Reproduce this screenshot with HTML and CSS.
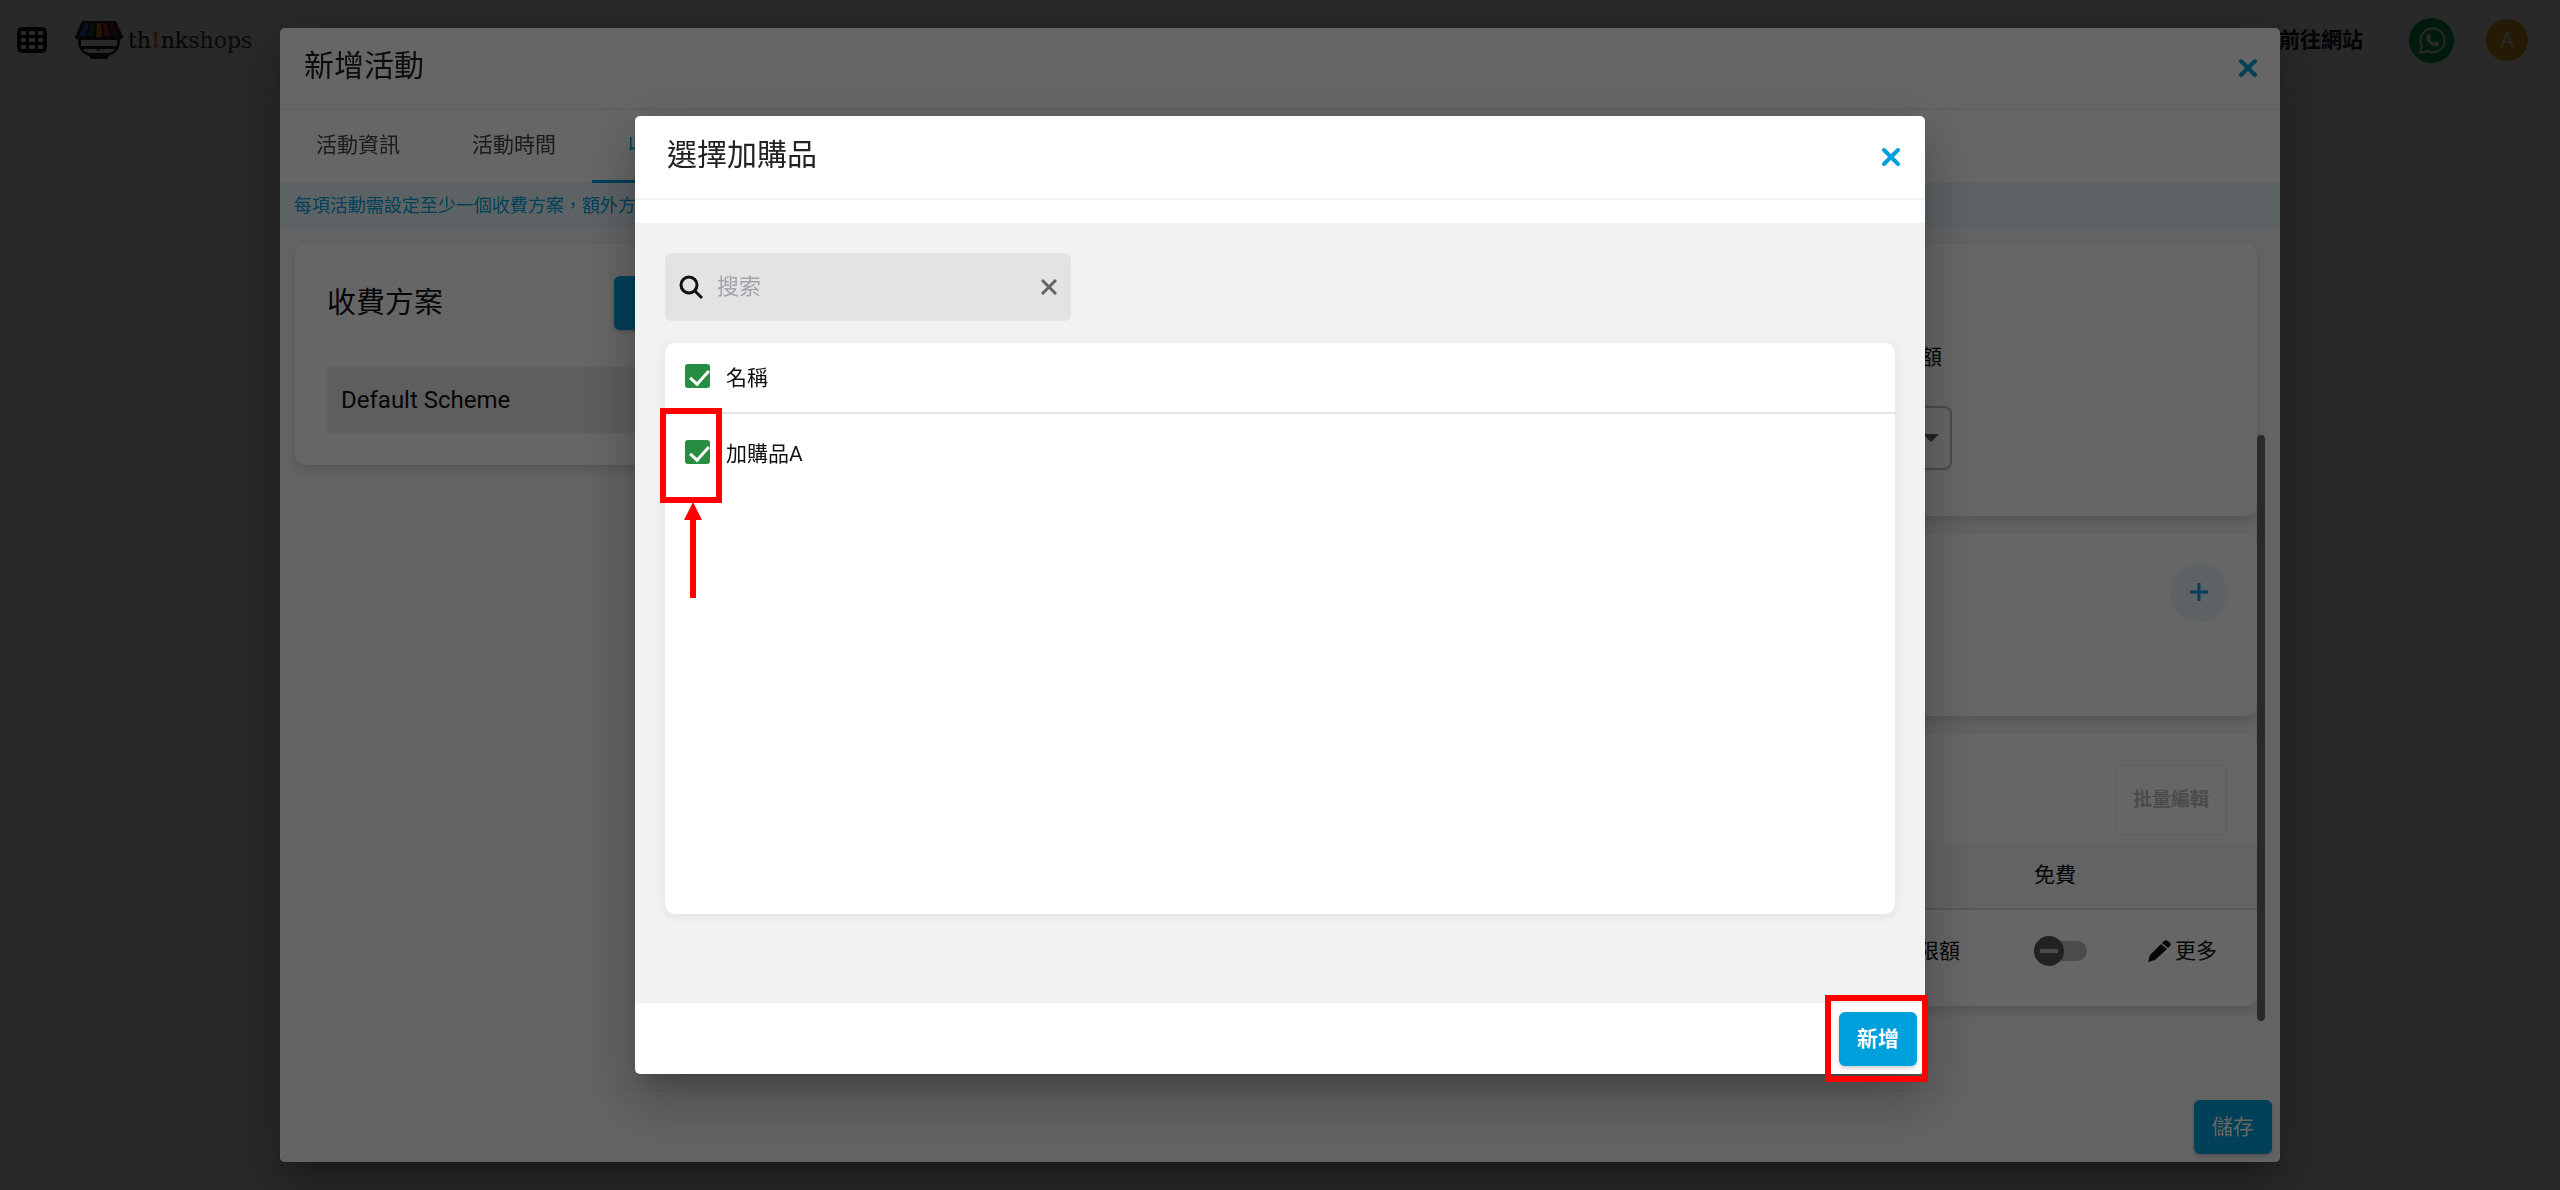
FILE: index.html
```html
<!DOCTYPE html>
<html lang="zh-Hant">
<head>
    <meta charset="UTF-8">
    <meta name="viewport" content="width=device-width, initial-scale=1.0">
    <title>thinkshops</title>
    <link rel="stylesheet" href="styles.css">
</head>
<body>
    <header class="topbar">
        <button class="icon-btn" aria-label="選單">
            <svg width="30" height="28" viewBox="0 0 30 28">
                <rect x="0" y="1" width="30" height="26" rx="5" fill="#111"/>
                <g fill="#fff">
                    <rect x="4" y="5" width="5" height="4" rx="1"/><rect x="12" y="5" width="6" height="4" rx="1"/><rect x="21" y="5" width="5" height="4" rx="1"/>
                    <rect x="4" y="12" width="5" height="4" rx="1"/><rect x="12" y="12" width="6" height="4" rx="1"/><rect x="21" y="12" width="5" height="4" rx="1"/>
                    <rect x="4" y="19" width="5" height="4" rx="1"/><rect x="12" y="19" width="6" height="4" rx="1"/><rect x="21" y="19" width="5" height="4" rx="1"/>
                </g>
            </svg>
        </button>
        <a class="logo" href="#">
            <svg width="50" height="40" viewBox="0 0 50 40">
                <path d="M4 17v4c0 7 4 13 11 15l2 3h16l2-3c7-2 11-8 11-15v-4z" fill="#222"/>
                <path d="M7 20h36v6H7zM9 29h13l2 2 3-2h14c-2 3-5 4-8 4H17c-4 0-6-1-8-4z" fill="#fff"/>
                <path d="M8 1h34l7 16c0 3-8 4-8 1 0 3-8 3-8 0 0 3-8 3-8 0 0 3-8 3-8 0 0 3-8 3-8 0 0 3-8 2-8-1z" fill="#222"/>
                <path d="M11 3h4l-3 13H5z" fill="#2471b8"/>
                <path d="M17 3h4l-2 13h-5z" fill="#26704a"/>
                <path d="M23 3h4l1 14h-6z" fill="#e8951c"/>
                <path d="M29 3h4l3 13h-6z" fill="#dc3545"/>
                <path d="M35 3h4l5 13h-5z" fill="#7b3024"/>
            </svg>
            <span class="logo-text">th<span class="logo-mark">!</span>nk<span class="logo-sub">shops</span></span>
        </a>
        <nav class="topbar-right">
            <a class="site-link" href="#">前往網站</a>
            <a class="whatsapp" href="#" aria-label="WhatsApp">
                <svg width="28" height="28" viewBox="0 0 28 28">
                    <path d="M2 27l2-7a12 12 0 1 1 5 5z" fill="none" stroke="#fff" stroke-width="2"/>
                    <path d="M10 8c1-1 2 0 3 3l-1 2c1 2 2 3 4 4l2-2c3 1 4 2 3 4-3 3-7 1-10-2s-4-7-1-9z" fill="#fff"/>
                </svg>
            </a>
            <span class="avatar">A</span>
        </nav>
    </header>

    <!-- event dialog -->
    <div class="backdrop">
        <section class="dialog event-dialog" role="dialog" aria-label="新增活動">
            <div class="dialog-header">
                <h2 class="dialog-title">新增活動</h2>
                <button class="icon-btn close" aria-label="關閉">
                    <svg width="20" height="20" viewBox="0 0 20 20"><path d="M3 3l14 14M17 3L3 17"/></svg>
                </button>
            </div>
            <div class="tabs">
                <button class="tab">活動資訊</button>
                <button class="tab">活動時間</button>
                <button class="tab active">收費方案</button>
            </div>
            <p class="notice">每項活動需設定至少一個收費方案，額外方案</p>
            <div class="event-body">
                <div class="card scheme-card">
                    <div class="scheme-head">
                        <h3>收費方案</h3>
                        <button class="btn btn-wide">+ 新增</button>
                    </div>
                    <div class="scheme-item">Default Scheme</div>
                </div>
                <div class="event-main">
                    <div class="card quota-card">
                        <div class="field">
                            <label for="quota">限額</label>
                            <div class="select-wrap">
                                <select id="quota"><option></option></select>
                            </div>
                        </div>
                    </div>
                    <div class="card addon-card">
                        <button class="add-round" aria-label="新增加購品">
                            <svg width="18" height="18" viewBox="0 0 18 18"><path d="M9 0v18M0 9h18" stroke="#00a0dc" stroke-width="3"/></svg>
                        </button>
                    </div>
                    <div class="card session-card">
                        <div class="session-tools">
                            <button class="batch-btn" disabled>批量編輯</button>
                        </div>
                        <table class="session-table">
                            <thead>
                                <tr><th class="quota-col"></th><th class="free-col">免費</th><th class="more-col"></th></tr>
                            </thead>
                            <tbody>
                                <tr>
                                    <td class="quota-col">限額</td>
                                    <td><input class="switch" type="checkbox" aria-label="免費"></td>
                                    <td>
                                        <button class="more-btn">
                                            <svg width="23" height="22" viewBox="0 0 23 22"><path d="M0 22l2-7L13 4l6 5L7 20zM15 2c2-2 3-2 5-1l2 2c1 1 1 3-1 4l-1 1-6-5z" fill="#111"/></svg>更多
                                        </button>
                                    </td>
                                </tr>
                            </tbody>
                        </table>
                    </div>
                </div>
                <div class="scroll-thumb"></div>
            </div>
            <div class="dialog-footer">
                <button class="btn btn-save">儲存</button>
            </div>
        </section>
    </div>

    <!-- add-on picker -->
    <div class="backdrop">
        <section class="dialog picker-dialog" role="dialog" aria-label="選擇加購品">
            <div class="dialog-header">
                <h2 class="dialog-title">選擇加購品</h2>
                <button class="icon-btn close" aria-label="關閉">
                    <svg width="20" height="20" viewBox="0 0 20 20"><path d="M3 3l14 14M17 3L3 17"/></svg>
                </button>
            </div>
            <div class="picker-body">
                <div class="search">
                    <svg width="24" height="24" viewBox="0 0 24 24" fill="none" stroke="#111"><circle cx="10" cy="10" r="8" stroke-width="3"/><path d="M15 15l8 8" stroke-width="3"/></svg>
                    <input type="text" placeholder="搜索" aria-label="搜索">
                    <button class="icon-btn clear" aria-label="清除">
                        <svg width="16" height="16" viewBox="0 0 16 16"><path d="M1 1l14 14M15 1L1 15" stroke="#666" stroke-width="3"/></svg>
                    </button>
                </div>
                <div class="card picker-card">
                    <table class="picker-table">
                        <thead>
                            <tr>
                                <th class="check-col"><input class="check" type="checkbox" id="all" checked></th>
                                <th><label for="all">名稱</label></th>
                            </tr>
                        </thead>
                        <tbody>
                            <tr>
                                <td class="check-col"><input class="check" type="checkbox" id="item-a" checked></td>
                                <td><label for="item-a">加購品A</label></td>
                            </tr>
                        </tbody>
                    </table>
                    <div class="mark mark-check"></div>
                    <svg class="mark-arrow" width="20" height="96" viewBox="0 0 20 96"><path d="M10 0l9 18h-6v78H7V18H1z" fill="#f00"/></svg>
                </div>
            </div>
            <div class="dialog-footer">
                <div class="add-wrap">
                    <button class="btn">新增</button>
                    <div class="mark mark-add"></div>
                </div>
            </div>
        </section>
    </div>
</body>
</html>
```
FILE: styles.css
```css
* {
    box-sizing: border-box;
}

body {
    margin: 0;
    min-height: 100vh;
    background: #fff;
    color: #111;
    font-family: Roboto, "Noto Sans CJK TC", sans-serif;
    font-size: 21px;
    line-height: 30px;
    overflow: hidden;
}

h2, h3, p {
    margin: 0;
    font-weight: normal;
}

button, input, select {
    font: inherit;
    color: inherit;
}

button {
    border: 0;
    padding: 0;
    background: none;
    cursor: pointer;
}

a {
    color: inherit;
    text-decoration: none;
}

svg {
    display: block;
}

/* top bar */
.topbar {
    display: flex;
    align-items: center;
    height: 80px;
    padding: 0 32px 0 17px;
}

.logo {
    display: flex;
    align-items: center;
    gap: 4px;
    margin-left: 27px;
}

.logo-text {
    font-family: "DejaVu Serif", serif;
    font-size: 22px;
    color: #222;
}

.logo-mark {
    color: #f58220;
    font-weight: bold;
}

.logo-sub {
    color: #444;
}

.topbar-right {
    display: flex;
    align-items: center;
    gap: 32px;
    margin-left: auto;
}

.site-link {
    margin-right: 14px;
    font-weight: bold;
}

.whatsapp, .avatar {
    display: flex;
    align-items: center;
    justify-content: center;
    width: 45px;
    height: 45px;
    border-radius: 50%;
    background: #00a651;
}

.avatar {
    width: 42px;
    height: 42px;
    background: #e5a823;
    color: #fff;
}

/* dialogs */
.backdrop {
    position: fixed;
    inset: 0;
    display: flex;
    align-items: center;
    justify-content: center;
    background: rgba(0, 0, 0, 0.6);
}

.dialog {
    display: flex;
    flex-direction: column;
    border-radius: 5px;
    background: #fff;
    box-shadow: 0 15px 20px -9px rgba(0, 0, 0, 0.2), 0 32px 50px 4px rgba(0, 0, 0, 0.14), 0 12px 60px 10px rgba(0, 0, 0, 0.12);
}

.event-dialog {
    width: calc(100% - 560px);
    height: calc(100vh - 56px);
}

.picker-dialog {
    width: 90%;
    max-width: 1290px;
    height: calc(100vh - 232px);
}

.dialog-header {
    display: flex;
    align-items: center;
    justify-content: space-between;
    height: 82px;
    padding: 0 22px 0 24px;
    border-bottom: 2px solid #f2f2f2;
}

.picker-dialog .dialog-header {
    height: 84px;
    padding: 0 24px 0 32px;
}

.dialog-title {
    padding-bottom: 4px;
    font-size: 30px;
    line-height: 40px;
    color: #222;
}

.close path {
    stroke: #00a0dc;
    stroke-width: 4;
    stroke-linecap: round;
}

.dialog-footer {
    display: flex;
    align-items: center;
    justify-content: flex-end;
    height: 72px;
    padding: 0 8px;
    border-top: 1px solid #eee;
}

.btn {
    height: 54px;
    padding: 0 18px;
    border-radius: 6px;
    background: #00a0dc;
    color: #fff;
    font-weight: bold;
    box-shadow: 0 2px 4px rgba(0, 0, 0, 0.2);
}

.btn-save {
    font-weight: normal;
}

.btn-wide {
    min-width: 110px;
}

.card {
    border-radius: 10px;
    background: #fff;
    box-shadow: 0 5px 12px rgba(0, 0, 0, 0.15);
}

/* event dialog */
.tabs {
    display: flex;
    height: 73px;
}

.tab {
    padding: 0 36px;
    border-bottom: 3px solid transparent;
    color: #444;
}

.tab.active {
    border-color: #00a0dc;
    color: #00a0dc;
}

.notice {
    height: 45px;
    padding: 0 14px;
    background: #e8f4fb;
    color: #00a0dc;
    font-size: 18px;
    line-height: 45px;
}

.event-body {
    position: relative;
    display: grid;
    grid-template-columns: 461px 1fr;
    align-items: start;
    gap: 16px;
    flex: 1;
    padding: 16px 23px 16px 15px;
    background: #f8f8f8;
}

.event-dialog .dialog-footer {
    background: #f8f8f8;
    border-radius: 0 0 5px 5px;
}

.scheme-card {
    padding: 32px;
}

.scheme-head {
    display: flex;
    align-items: center;
    justify-content: space-between;
    margin-bottom: 37px;
}

.scheme-head h3 {
    font-size: 29px;
    line-height: 40px;
}

.scheme-item {
    padding: 18px 14px;
    background: #eaeaea;
    font-size: 24px;
}

.event-main {
    display: flex;
    flex-direction: column;
    gap: 18px;
}

.quota-card {
    display: flex;
    justify-content: flex-end;
    height: 272px;
    padding: 98px 305px 0 32px;
}

.field {
    width: 160px;
}

.field label {
    display: block;
    padding-right: 10px;
    margin-bottom: 34px;
    text-align: right;
}

.select-wrap {
    position: relative;
}

.select-wrap::after {
    content: "";
    position: absolute;
    top: 28px;
    right: 13px;
    border: 8px solid transparent;
    border-top-color: #555;
    border-bottom: 0;
    pointer-events: none;
}

.field select {
    width: 100%;
    height: 64px;
    border: 2px solid #bbb;
    border-radius: 8px;
    background: transparent;
    appearance: none;
}

.addon-card {
    display: flex;
    justify-content: flex-end;
    height: 182px;
    padding: 30px;
}

.add-round {
    display: flex;
    align-items: center;
    justify-content: center;
    width: 56px;
    height: 56px;
    border-radius: 50%;
    background: #e8f4fb;
    box-shadow: 0 1px 3px rgba(0, 0, 0, 0.1);
}

.session-card {
    overflow: hidden;
}

.session-tools {
    display: flex;
    justify-content: flex-end;
    height: 108px;
    padding: 30px 30px 6px;
}

.batch-btn {
    padding: 0 16px;
    border: 2px solid #f2f2f2;
    border-radius: 6px;
    color: #bbb;
    font-size: 19px;
    font-weight: bold;
}

.session-table {
    width: 100%;
    table-layout: fixed;
    border-collapse: collapse;
}

.session-table th, .session-table td {
    padding: 0;
    font-weight: normal;
    text-align: left;
}

.session-table th {
    height: 67px;
    border-bottom: 2px solid #ddd;
    background: #f8f8f8;
}

.session-table td {
    height: 97px;
    padding-bottom: 14px;
}

.session-table .quota-col {
    padding-right: 74px;
    text-align: right;
}

.free-col {
    width: 114px;
}

.more-col {
    width: 109px;
}

.switch {
    position: relative;
    display: block;
    width: 53px;
    height: 20px;
    margin: 0;
    border-radius: 10px;
    background: #bbb;
    appearance: none;
}

.switch::before {
    content: "";
    position: absolute;
    top: -5px;
    left: 0;
    width: 30px;
    height: 30px;
    border-radius: 50%;
    background: linear-gradient(#bbb, #bbb) center / 18px 4px no-repeat #555;
}

.more-btn {
    display: flex;
    align-items: center;
    gap: 4px;
}

.scroll-thumb {
    position: absolute;
    top: 24%;
    right: 15px;
    bottom: 8%;
    width: 8px;
    border-radius: 4px;
    background: #666;
}

/* add-on picker */
.picker-body {
    display: flex;
    flex-direction: column;
    gap: 22px;
    flex: 1;
    margin-top: 23px;
    padding: 30px 30px 88px;
    background: #f2f2f2;
}

.search {
    display: flex;
    align-items: center;
    width: 406px;
    height: 68px;
    padding: 0 14px;
    border-radius: 6px;
    background: #e3e3e3;
}

.search input {
    flex: 1;
    min-width: 0;
    margin-left: 12px;
    border: 0;
    background: none;
    outline: 0;
    font-size: 22px;
}

.search input::placeholder {
    color: #a0a4aa;
}

.picker-card {
    position: relative;
    flex: 1;
    box-shadow: 0 2px 12px rgba(0, 0, 0, 0.08);
}

.picker-table {
    width: 100%;
    border-collapse: collapse;
}

.picker-table th, .picker-table td {
    height: 70px;
    padding: 0;
    font-weight: normal;
    text-align: left;
}

.picker-table th {
    border-bottom: 2px solid #e3e3e3;
}

.picker-table td {
    height: 80px;
}

.picker-table .check-col {
    width: 61px;
    padding: 0 0 4px 20px;
}

.check {
    position: relative;
    display: block;
    width: 25px;
    height: 24px;
    margin: 0;
    border-radius: 3px;
    background: #268e43;
    appearance: none;
}

.check:checked::after {
    content: "";
    position: absolute;
    top: 2px;
    left: 9px;
    width: 8px;
    height: 16px;
    border: solid #fff;
    border-width: 0 3px 3px 0;
    transform: rotate(42deg);
}

/* red guide marks */
.mark {
    position: absolute;
    border: 6px solid #f00;
    pointer-events: none;
}

.mark-check {
    top: 65px;
    left: -5px;
    width: 62px;
    height: 95px;
}

.mark-arrow {
    position: absolute;
    top: 159px;
    left: 18px;
}

.add-wrap {
    position: relative;
}

.mark-add {
    inset: -17px -11px -16px -14px;
}
```
